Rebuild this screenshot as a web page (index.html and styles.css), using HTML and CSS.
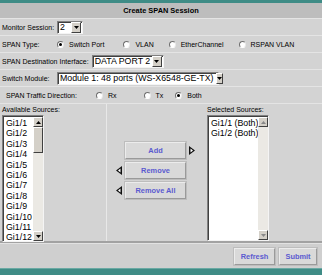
FILE: index.html
```html
<!DOCTYPE html>
<html lang="en">
<head>
    <meta charset="UTF-8">
    <title>Create SPAN Session</title>
    <link rel="stylesheet" href="styles.css">
</head>
<body>
<div class="page">
    <div class="band-top"></div>
    <div class="title">Create SPAN Session</div>

    <div class="row">
        <span class="label">Monitor Session:</span>
        <div class="select sel-session">
            <span class="select-text">2</span>
            <span class="select-btn"><svg width="5" height="3" viewBox="0 0 5 3"><polygon points="0,0 5,0 2.5,3" fill="#000"/></svg></span>
        </div>
    </div>

    <div class="row">
        <span class="label">SPAN Type:</span>
        <span class="opt opt-switch"><span class="radio on"></span>Switch Port</span>
        <span class="opt"><span class="radio"></span>VLAN</span>
        <span class="opt"><span class="radio"></span>EtherChannel</span>
        <span class="opt"><span class="radio"></span>RSPAN VLAN</span>
    </div>

    <div class="row">
        <span class="label wide">SPAN Destination Interface:</span>
        <div class="select sel-dest">
            <span class="select-text">DATA PORT 2</span>
            <span class="select-btn"><svg width="5" height="3" viewBox="0 0 5 3"><polygon points="0,0 5,0 2.5,3" fill="#000"/></svg></span>
        </div>
    </div>

    <div class="row">
        <span class="label">Switch Module:</span>
        <div class="select sel-module">
            <span class="select-text">Module 1: 48 ports (WS-X6548-GE-TX)</span>
            <span class="select-btn"><svg width="5" height="3" viewBox="0 0 5 3"><polygon points="0,0 5,0 2.5,3" fill="#000"/></svg></span>
        </div>
    </div>

    <div class="row indent">
        <span class="label wide">SPAN Traffic Direction:</span>
        <span class="opt opt-rx"><span class="radio"></span>Rx</span>
        <span class="opt opt-tx"><span class="radio"></span>Tx</span>
        <span class="opt"><span class="radio on"></span>Both</span>
    </div>

    <div class="sources">
        <div class="col col-avail">
            <div class="col-label">Available Sources:</div>
            <div class="listbox list-avail">
                <div class="items">
                    <div>Gi1/1</div><div>Gi1/2</div><div>Gi1/3</div><div>Gi1/4</div>
                    <div>Gi1/5</div><div>Gi1/6</div><div>Gi1/7</div><div>Gi1/8</div>
                    <div>Gi1/9</div><div>Gi1/10</div><div>Gi1/11</div><div>Gi1/12</div>
                </div>
                <div class="scroll">
                    <span class="sb-btn"><svg width="5" height="3" viewBox="0 0 5 3"><polygon points="0,3 5,3 2.5,0" fill="#000"/></svg></span>
                    <span class="thumb"></span>
                    <span class="track"></span>
                    <span class="sb-btn"><svg width="5" height="3" viewBox="0 0 5 3"><polygon points="0,0 5,0 2.5,3" fill="#000"/></svg></span>
                </div>
            </div>
        </div>

        <div class="col col-actions">
            <div class="action">
                <span class="arrow"></span>
                <button class="btn">Add</button>
                <span class="arrow"><svg width="6" height="9" viewBox="0 0 6 9"><polygon points="0,0 6,4.5 0,9" fill="#111"/><polygon points="1.5,2.5 4,4.5 1.5,6.5" fill="#fff"/></svg></span>
            </div>
            <div class="action">
                <span class="arrow"><svg width="6" height="9" viewBox="0 0 6 9"><polygon points="6,0 0,4.5 6,9" fill="#111"/><polygon points="4.5,2.5 2,4.5 4.5,6.5" fill="#fff"/></svg></span>
                <button class="btn">Remove</button>
                <span class="arrow"></span>
            </div>
            <div class="action">
                <span class="arrow"><svg width="6" height="9" viewBox="0 0 6 9"><polygon points="6,0 0,4.5 6,9" fill="#111"/><polygon points="4.5,2.5 2,4.5 4.5,6.5" fill="#fff"/></svg></span>
                <button class="btn">Remove All</button>
                <span class="arrow"></span>
            </div>
        </div>

        <div class="col col-selected">
            <div class="col-label">Selected Sources:</div>
            <div class="listbox list-selected">
                <div class="items">
                    <div>Gi1/1 (Both)</div><div>Gi1/2 (Both)</div>
                </div>
                <div class="scroll">
                    <span class="sb-btn"><svg width="5" height="3" viewBox="0 0 5 3"><polygon points="0,3 5,3 2.5,0" fill="#888"/></svg></span>
                    <span class="track"></span>
                    <span class="sb-btn"><svg width="5" height="3" viewBox="0 0 5 3"><polygon points="0,0 5,0 2.5,3" fill="#888"/></svg></span>
                </div>
            </div>
        </div>
    </div>

    <div class="footer">
        <button class="btn btn-refresh">Refresh</button>
        <button class="btn btn-submit">Submit</button>
    </div>
    <div class="band-bottom"></div>
</div>
</body>
</html>
```

FILE: styles.css
```css
body {
    margin: 0;
    font-family: "Liberation Sans", Arial, sans-serif;
    font-size: 7px;
    color: #000;
    background: #d3d3d3;
}
.page {
    width: 322px;
    height: 275px;
    display: flex;
    flex-direction: column;
    background: #d3d3d3;
}
.band-top {
    height: 3px;
    background: #3f8c86;
}
.title {
    height: 15px;
    line-height: 15px;
    background: #bdbdbd;
    text-align: center;
    font-weight: bold;
    font-size: 7.4px;
}
.row {
    height: 16px;
    border-top: 1px solid #e4e4e4;
    display: flex;
    align-items: center;
    padding-left: 2px;
    white-space: nowrap;
}
.row.indent {
    padding-left: 6px;
}
.label {
    min-width: 55px;
}
.label.wide {
    min-width: 0;
    margin-right: 3px;
}
.row.indent .label.wide {
    margin-right: 19px;
}

/* dropdowns */
.select {
    display: flex;
    align-items: center;
    height: 13px;
    box-sizing: border-box;
    background: #fff;
    border: 1px solid;
    border-color: #808080 #f4f4f4 #f4f4f4 #808080;
    box-shadow: inset 1px 1px 0 #404040;
}
.select-text {
    flex: 1;
    font-size: 8.8px;
    line-height: 11px;
    padding: 0 2px;
    white-space: nowrap;
}
.select-btn {
    width: 8px;
    height: 9px;
    margin-right: 1px;
    background: #d4d0c8;
    border: 1px solid;
    border-color: #fff #404040 #404040 #fff;
    display: flex;
    align-items: center;
    justify-content: center;
}
.sel-session { width: 26px; }
.sel-dest { width: 72px; }
.sel-module { width: 162px; }

/* radios */
.opt {
    display: flex;
    align-items: center;
    margin-right: 15px;
}
.opt-switch { margin-right: 19px; }
.opt-rx { margin-right: 27px; }
.opt-tx { margin-right: 12px; }
.radio {
    width: 5px;
    height: 5px;
    border-radius: 50%;
    border: 1px solid;
    border-color: #6e6e6e #e8e8e8 #fff #6e6e6e;
    background: #fff;
    margin-right: 5px;
    position: relative;
}
.radio.on::after {
    content: "";
    position: absolute;
    left: 1px;
    top: 1px;
    width: 3px;
    height: 3px;
    border-radius: 50%;
    background: #000;
}

/* source lists */
.sources {
    height: 137px;
    border-top: 1px solid #e4e4e4;
    border-bottom: 2px solid #a2a2a2;
    display: flex;
}
.col {
    display: flex;
    flex-direction: column;
}
.col-avail {
    width: 104px;
    padding: 1px 0 0 2px;
    border-right: 1px solid #e8e8e8;
}
.col-actions {
    width: 97px;
    justify-content: center;
    align-items: center;
    gap: 3px;
    padding-bottom: 4px;
}
.col-selected {
    flex: 1;
    padding: 1px 0 0 3px;
}
.col-label {
    height: 9px;
    line-height: 9px;
    margin-bottom: 1px;
}
.listbox {
    display: flex;
    box-sizing: border-box;
    height: 127px;
    background: #fff;
    border: 1px solid;
    border-color: #808080 #f4f4f4 #f4f4f4 #808080;
    box-shadow: inset 1px 1px 0 #404040;
}
.list-avail { width: 42px; }
.list-selected { width: 62px; }
.items {
    flex: 1;
    padding: 2px 0 0 3px;
    font-size: 8.8px;
    line-height: 10.4px;
    white-space: nowrap;
    overflow: hidden;
}
.scroll {
    width: 10px;
    margin-top: 1px;
    display: flex;
    flex-direction: column;
    background: #ebe9e4;
}
.sb-btn, .thumb {
    height: 8px;
    background: #d4d0c8;
    border: 1px solid;
    border-color: #fff #404040 #404040 #fff;
    display: flex;
    align-items: center;
    justify-content: center;
}
.thumb {
    height: 24px;
}
.track {
    flex: 1;
}

/* buttons */
.action {
    display: flex;
    align-items: center;
    gap: 3px;
}
.arrow {
    width: 6px;
    height: 9px;
    display: flex;
}
.btn {
    width: 61px;
    height: 17px;
    padding: 0;
    font-family: inherit;
    font-size: 7.4px;
    font-weight: bold;
    color: #5b5bd0;
    background: #d9d9d9;
    border: 1px solid;
    border-color: #ececec #9a9a9a #9a9a9a #ececec;
    box-shadow: 0 0 0 1px #bdbdbd;
}
.footer {
    height: 24px;
    border-top: 1px solid #e2e2e2;
    display: flex;
    justify-content: flex-end;
    align-items: center;
    gap: 4px;
    padding-right: 5px;
    background: #cfcfcf;
}
.btn-refresh {
    width: 41px;
}
.btn-submit {
    width: 38px;
}
.band-bottom {
    height: 6px;
    background: #3f8c86;
    border-top: 1px solid #6aa9a3;
}
```
